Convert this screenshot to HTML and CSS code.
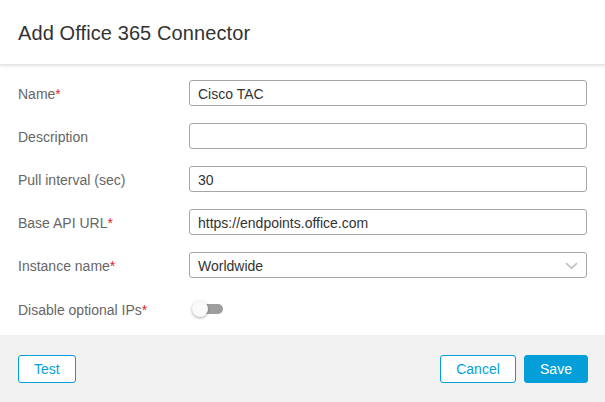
FILE: index.html
```html
<!DOCTYPE html>
<html>
<head>
<meta charset="utf-8">
<link rel="stylesheet" href="styles.css">
</head>
<body>
<div class="dialog">
  <div class="header"><h1 class="title">Add Office 365 Connector</h1></div>
  <div class="body">
    <div class="row">
      <label class="label">Name<span class="req">*</span></label>
      <div class="input">Cisco TAC</div>
    </div>
    <div class="row">
      <label class="label">Description</label>
      <div class="input"></div>
    </div>
    <div class="row">
      <label class="label">Pull interval (sec)</label>
      <div class="input">30</div>
    </div>
    <div class="row">
      <label class="label">Base API URL<span class="req">*</span></label>
      <div class="input">https://endpoints.office.com</div>
    </div>
    <div class="row">
      <label class="label">Instance name<span class="req">*</span></label>
      <div class="input select">Worldwide
        <svg class="chev" width="13" height="8" viewBox="0 0 13 8"><path d="M1 1.2 L6.5 6.2 L12 1.2" fill="none" stroke="#c4c4c4" stroke-width="1.8"/></svg>
      </div>
    </div>
    <div class="row toggle-row">
      <label class="label">Disable optional IPs<span class="req">*</span></label>
      <div class="toggle"><span class="track"></span><span class="knob"></span></div>
    </div>
  </div>
  <div class="footer">
    <button class="btn">Test</button>
    <div class="right">
      <button class="btn cancel">Cancel</button>
      <button class="btn primary">Save</button>
    </div>
  </div>
</div>
</body>
</html>
```

FILE: styles.css
```css
* { box-sizing: border-box; }
html, body { margin: 0; padding: 0; background: #fff; }
body { font-family: "Liberation Sans", Arial, sans-serif; width: 605px; height: 402px; overflow: hidden; }
.dialog { display: flex; flex-direction: column; height: 402px; }
.header { height: 65px; padding: 0 18px; display: flex; align-items: center; box-shadow: 0 1px 3px rgba(0,0,0,0.12); border-bottom: 1px solid #e6e6e6; position: relative; z-index: 1; }
.title { margin: 0; font-size: 20px; font-weight: normal; color: #333; padding-top: 2px; letter-spacing: 0.1px; }
.body { padding: 15px 18px 0 18px; flex: 1; display: flex; flex-direction: column; gap: 17px; }
.row { display: flex; align-items: center; height: 26px; }
.label { width: 171px; flex: none; font-size: 14px; color: #666; padding-top: 2px; }
.req { color: #e2231a; }
.input { flex: 1; height: 26px; border: 1px solid #a6a6a6; border-radius: 3px; padding: 0 8px; font-size: 14px; color: #333; display: flex; align-items: center; padding-top: 1px; }
.select { justify-content: space-between; }
.chev { margin-right: 0; }
.toggle-row { margin-top: 1px; }
.toggle { position: relative; width: 34px; height: 16px; margin-left: 3px; }
.track { position: absolute; left: 9px; top: 3px; width: 22px; height: 10px; border-radius: 5px; background: #9e9e9e; }
.knob { position: absolute; left: 0; top: 0; width: 16px; height: 16px; border-radius: 50%; background: #fafafa; box-shadow: 0 1px 3px rgba(0,0,0,0.35); }
.footer { height: 67px; background: #f2f2f2; padding: 20px 17px 19px 18px; display: flex; justify-content: space-between; align-items: flex-start; }
.right { display: flex; gap: 8px; }
.btn { height: 28px; border: 1px solid #049fd9; border-radius: 3px; background: #fff; color: #049fd9; font-family: "Liberation Sans", Arial, sans-serif; font-size: 14px; padding: 0 15px; cursor: pointer; }
.cancel { width: 76px; }
.primary { background: #049fd9; color: #fff; width: 64px; }
```
